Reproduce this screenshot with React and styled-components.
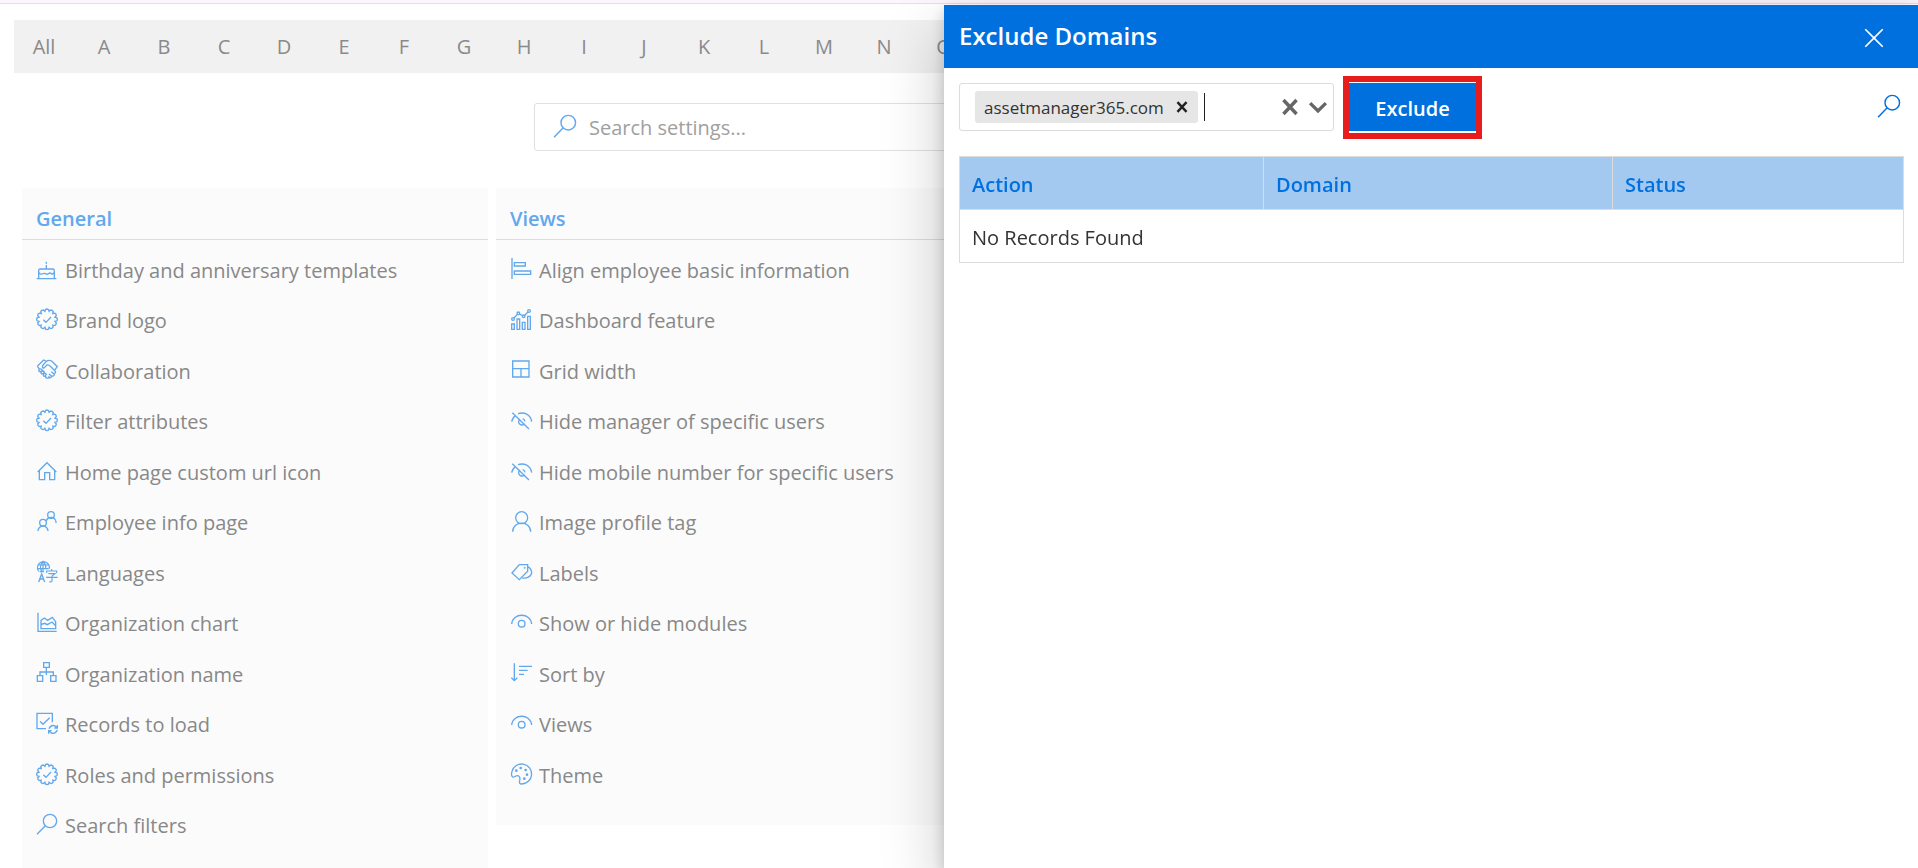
import React from 'react';
import styled, { createGlobalStyle } from 'styled-components';

const GlobalStyle = createGlobalStyle`
  *, *::before, *::after { box-sizing: border-box; }
  body {
    margin: 0;
    background: #fff;
    font-family: 'Open Sans', 'Noto Sans', sans-serif;
    font-size: 20px;
    color: #333;
  }
  button, input { font: inherit; }
`;

const Page = styled.div`
  height: 100vh;
  overflow: hidden;
`;

const TopStrip = styled.div`
  height: 4px;
  background: #fcf5fd;
  border-bottom: 1px solid #eadcea;
`;

const LetterBar = styled.nav`
  display: flex;
  height: 53px;
  margin: 16px 14px 0;
  overflow: hidden;
  background: #f1f1f1;
`;

const LetterButton = styled.button`
  flex: 0 0 60px;
  padding: 0;
  border: 0;
  background: none;
  color: #8a8a8a;
  cursor: pointer;
`;

const SearchBox = styled.label`
  display: flex;
  align-items: center;
  gap: 12px;
  width: 850px;
  max-width: 100%;
  height: 48px;
  margin: 30px auto 37px;
  padding: 0 18px;
  border: 1px solid #e0e0e0;
  border-radius: 3px;
  color: #62a8ec;
`;

const SearchInput = styled.input`
  flex: 1;
  min-width: 0;
  padding: 0;
  border: 0;
  outline: 0;
  background: none;
  color: #888;
  &::placeholder { color: #a0a0a0; opacity: 1; }
`;

const CardGrid = styled.main`
  display: grid;
  grid-template-columns: repeat(4, 1fr);
  align-items: start;
  gap: 8px;
  padding: 0 8px 0 22px;
`;

const Card = styled.section`
  background: #fbfbfb;
`;

const CardTitle = styled.h2`
  margin: 0;
  padding: 11px 14px 0;
  border-bottom: 1px solid #dcdcdc;
  color: #62a8ec;
  font-size: 20px;
  font-weight: 600;
  line-height: 40px;
`;

const SettingList = styled.ul`
  margin: 0;
  padding: 5px 14px 25px;
  list-style: none;
`;

const SettingItem = styled.li`
  &:nth-child(even) { margin-bottom: 1px; }
`;

const SettingLink = styled.a`
  display: flex;
  align-items: center;
  gap: 7px;
  height: 50px;
  color: #888;
  text-decoration: none;
  white-space: nowrap;
  svg { color: #62a8ec; }
`;

const Glyph = styled.svg.attrs({ viewBox: '0 0 66 66', 'aria-hidden': true })`
  flex: none;
  width: ${(p) => p.$size || 22}px;
  height: ${(p) => p.$size || 22}px;
  overflow: visible;
  fill: none;
  stroke: currentColor;
  stroke-width: ${(p) => p.$stroke || 4};
`;

const Panel = styled.aside`
  position: fixed;
  top: 5px;
  right: 0;
  bottom: 0;
  width: calc(50vw + 15px);
  background: #fff;
  box-shadow: 0 26px 58px rgba(0, 0, 0, 0.22), 0 5px 14px rgba(0, 0, 0, 0.18);
`;

const PanelHeader = styled.header`
  display: flex;
  align-items: center;
  justify-content: space-between;
  height: 63px;
  padding: 2px 31px 0 15px;
  background: #0070de;
  color: #fff;
`;

const PanelTitle = styled.h1`
  margin: 0;
  padding-bottom: 4px;
  font-size: 24px;
  font-weight: 600;
`;

const IconButton = styled.button`
  display: flex;
  padding: 4px;
  border: 0;
  background: none;
  color: ${(p) => p.$color};
  cursor: pointer;
`;

const PanelBody = styled.div`
  padding: 15px 14px 0 15px;
`;

const Toolbar = styled.div`
  display: flex;
  align-items: center;
  margin-bottom: 25px;
`;

const DomainField = styled.div`
  display: flex;
  align-items: center;
  width: 375px;
  height: 48px;
  margin-right: 15px;
  padding: 0 1px 0 15px;
  border: 1px solid #dcdcdc;
  border-radius: 3px;
`;

const Tag = styled.span`
  display: flex;
  align-items: center;
  justify-content: space-between;
  flex: none;
  width: 223px;
  height: 32px;
  padding: 0 6px 0 9px;
  border-radius: 3px;
  background: #e6e6e6;
  font-size: 17px;
`;

const Caret = styled.span`
  width: 1px;
  height: 28px;
  margin-left: 6px;
  background: #222;
`;

const DomainInput = styled.input`
  flex: 1;
  min-width: 0;
  padding: 0;
  border: 0;
  outline: 0;
  background: none;
`;

const FieldActions = styled.div`
  display: flex;
  align-items: center;
  gap: 2px;
`;

const ExcludeButton = styled.button`
  position: relative;
  width: 127px;
  height: 48px;
  padding: 2px 0 0;
  border: 0;
  background: #0070de;
  color: #fff;
  font-weight: 600;
  cursor: pointer;
  &::after {
    content: '';
    position: absolute;
    inset: -7px -6px -8px;
    border: 6px solid #e71c1c;
  }
`;

const ToolbarEnd = styled.div`
  margin: 0 -1px 0 auto;
`;

const DomainTable = styled.table`
  width: 100%;
  table-layout: fixed;
  border-collapse: collapse;
  border: 1px solid #dcdcdc;
  text-align: left;
`;

const HeadCell = styled.th`
  width: ${(p) => p.$width || 'auto'};
  height: 53px;
  padding: 2px 12px 0;
  border: 1px solid #dcdcdc;
  background: #a3c9f1;
  color: #0070de;
  font-weight: 600;
`;

const BodyCell = styled.td`
  height: 53px;
  padding: 2px 12px 0;
`;

const badgeOutline = (() => {
  const lobes = 12;
  const point = (angle, radius) =>
    `${(33 + radius * Math.sin(angle)).toFixed(1)} ${(31 - radius * Math.cos(angle)).toFixed(1)}`;
  const step = (2 * Math.PI) / lobes;
  let d = `M${point(-step / 2, 24.5)}`;
  for (let i = 0; i < lobes; i += 1) {
    const a = i * step;
    d += `L${point(a - step * 0.28, 30)}L${point(a, 31)}L${point(a + step * 0.28, 30)}L${point(a + step / 2, 24.5)}`;
  }
  return `${d}Z`;
})();

const magnifier = <><circle cx="42" cy="21" r="20" /><path d="M28 35L3 61" /></>;
const badge = <><path d={badgeOutline} /><path d="M22 32l8 8 15-16" /></>;
const eye = <><path d="M5 36C8 1 62 1 65 36" /><circle cx="35" cy="35" r="10" /></>;
const eyeOff = <><path d="M5 35C7 26 11 20 17 17M24 11C42 5 62 13 65 35M7 8L57 57M30 27a10 10 0 1 0 14 14M38 26a10 10 0 0 1 7 8" /></>;

const drawings = {
  cake: <path d="M2 59H61M8 59V35q0-5 5-5h37q5 0 5 5V59M8 40q4 7 9 5t9-2q6 5 11 1t9 0 9-5M31 30V18M31 8v6" />,
  badge,
  handshake: (
    <path d="M4 19L23 0l8 4q8-5 16-1l17 17-8 10M31 4L20 17q-2 8 4 7l9-9q6-1 10 4l15 15q2 6-4 6M4 19l7 9M11 27q-5 6 0 8 4 1 8-5-3-5-8-3M17 34q-4 6 1 8 4 0 7-6-3-5-8-2M24 41q-4 6 1 8 4 0 6-6-3-5-7-2M30 47q-3 6 2 7 8 1 7-6M46 35l9 8q0 6-7 5M39 42l8 7q-2 6-8 4" />
  ),
  home: <path d="M5 33L33 5l28 28M10 29V56H26V35H41V56H56V29" />,
  people: <><circle cx="45" cy="12" r="10" /><circle cx="21" cy="35" r="10" /><path d="M6 60a15 15 0 0 1 30 0M31 29a15 15 0 0 1 29 7" /></>,
  languages: (
    <g strokeWidth="3.5">
      <path d="M8 28A18 18 0 1 1 40 20M11 29H24M4 9H37M4 20H38M21-3V30M21-3Q8 14 18 30M21-3Q31 8 29 22" />
      <path strokeWidth="4" d="M8 60l9-24 9 24M11 51h12" />
      <path d="M32 33V27H62V33M47 27V21M37 35H57L48 42V56q0 5-8 3M30 46H65" />
    </g>
  ),
  areaChart: <path d="M6 2V58H62M15 50V25l10-7 10 7 14-9 10 13V50ZM15 38l11-4 8 4 14-8 11 11" />,
  orgTree: <path d="M23-1H40V13H23ZM31 13V36M12 37V27H52V37M4 38H20V55H4ZM44 38H60V55H44Z" />,
  syncBox: <><path d="M30 47H3V1H49V28M12 25l9 9 20-20" /><path d="M39 47Q44 35 56 38L63 44M64 36V45H55M64 51Q58 64 46 60L39 54M38 62V53H47" /></>,
  magnifier,
  align: <path d="M6-3V60M13 11H46V21H13ZM13 36H62V46H13Z" />,
  dashboard: (
    <>
      <path d="M5 45H13V61H5ZM21 30H29V61H21ZM37 40H45V61H37ZM53 22H61V61H53ZM12 27L22 16M28 15L38 20M44 19L54 9" />
      <circle cx="9" cy="30" r="4" /><circle cx="25" cy="13" r="4" /><circle cx="41" cy="22" r="4" /><circle cx="57" cy="6" r="4" />
    </>
  ),
  grid: <path d="M8 3H57V51H8ZM8 26H57M33 26V51" />,
  eyeOff,
  person: <><circle cx="35" cy="20" r="18" /><path d="M8 62C9 28 61 28 62 62" /></>,
  tags: <><path d="M6 33L28 8H53V28L28 53ZM53 14Q65 20 65 33L63 38Q56 50 37 48" /><circle cx="44" cy="17" r="1" /></>,
  eye,
  sort: <path d="M13 1V53M4 44l9 9 9-9M27 10H66M27 22H53M27 34H42" />,
  palette: (
    <>
      <path d="M35 60c-6 0-8-4-6-10 2-8 0-15-7-15-6 0-9 6-14 4C4 36 4 29 6 22A30 30 0 1 1 35 60Z" />
      <g fill="currentColor" stroke="none">
        <circle cx="32" cy="12" r="4" /><circle cx="47" cy="18" r="4" /><circle cx="51" cy="32" r="4" />
        <circle cx="43" cy="44" r="4" /><circle cx="19" cy="20" r="4" />
      </g>
    </>
  ),
};

const letters = ['All', ...'ABCDEFGHIJKLMNO'];

const cards = [
  {
    title: 'General',
    items: [
      ['cake', 'Birthday and anniversary templates'],
      ['badge', 'Brand logo'],
      ['handshake', 'Collaboration'],
      ['badge', 'Filter attributes'],
      ['home', 'Home page custom url icon'],
      ['people', 'Employee info page'],
      ['languages', 'Languages'],
      ['areaChart', 'Organization chart'],
      ['orgTree', 'Organization name'],
      ['syncBox', 'Records to load'],
      ['badge', 'Roles and permissions'],
      ['magnifier', 'Search filters'],
    ],
  },
  {
    title: 'Views',
    items: [
      ['align', 'Align employee basic information'],
      ['dashboard', 'Dashboard feature'],
      ['grid', 'Grid width'],
      ['eyeOff', 'Hide manager of specific users'],
      ['eyeOff', 'Hide mobile number for specific users'],
      ['person', 'Image profile tag'],
      ['tags', 'Labels'],
      ['eye', 'Show or hide modules'],
      ['sort', 'Sort by'],
      ['eye', 'Views'],
      ['palette', 'Theme'],
    ],
  },
];

export default function App() {
  return (
    <Page>
      <GlobalStyle />
      <TopStrip />
      <LetterBar aria-label="Filter by letter">
        {letters.map((letter) => (
          <LetterButton key={letter} type="button">{letter}</LetterButton>
        ))}
      </LetterBar>
      <SearchBox>
        <Glyph $size={24}>{magnifier}</Glyph>
        <SearchInput type="text" placeholder="Search settings..." aria-label="Search settings" />
      </SearchBox>
      <CardGrid>
        {cards.map((card) => (
          <Card key={card.title}>
            <CardTitle>{card.title}</CardTitle>
            <SettingList>
              {card.items.map(([icon, label]) => (
                <SettingItem key={label}>
                  <SettingLink href="#">
                    <Glyph>{drawings[icon]}</Glyph>
                    {label}
                  </SettingLink>
                </SettingItem>
              ))}
            </SettingList>
          </Card>
        ))}
      </CardGrid>

      <Panel aria-label="Exclude Domains">
        <PanelHeader>
          <PanelTitle>Exclude Domains</PanelTitle>
          <IconButton type="button" aria-label="Close" $color="#fff">
            <Glyph $size={18} $stroke={6}><path d="M1 1L65 65M65 1L1 65" /></Glyph>
          </IconButton>
        </PanelHeader>
        <PanelBody>
          <Toolbar>
            <DomainField>
              <Tag>
                assetmanager365.com
                <IconButton type="button" aria-label="Remove assetmanager365.com" $color="#222">
                  <Glyph $size={12} $stroke={13}><path d="M8 6L58 60M58 6L8 60" /></Glyph>
                </IconButton>
              </Tag>
              <Caret />
              <DomainInput type="text" aria-label="Domain" />
              <FieldActions>
                <IconButton type="button" aria-label="Clear all" $color="#666">
                  <Glyph $size={16} $stroke={14}><path d="M6 4L60 62M60 4L6 62" /></Glyph>
                </IconButton>
                <IconButton type="button" aria-label="Show domains" $color="#666">
                  <Glyph $size={20} $stroke={11}><path d="M7 20L33 46L59 20" /></Glyph>
                </IconButton>
              </FieldActions>
            </DomainField>
            <ExcludeButton type="button">Exclude</ExcludeButton>
            <ToolbarEnd>
              <IconButton type="button" aria-label="Search" $color="#0070de">
                <Glyph $size={24}>{magnifier}</Glyph>
              </IconButton>
            </ToolbarEnd>
          </Toolbar>
          <DomainTable>
            <thead>
              <tr>
                <HeadCell scope="col" $width="304px">Action</HeadCell>
                <HeadCell scope="col" $width="349px">Domain</HeadCell>
                <HeadCell scope="col">Status</HeadCell>
              </tr>
            </thead>
            <tbody>
              <tr>
                <BodyCell colSpan={3}>No Records Found</BodyCell>
              </tr>
            </tbody>
          </DomainTable>
        </PanelBody>
      </Panel>
    </Page>
  );
}
